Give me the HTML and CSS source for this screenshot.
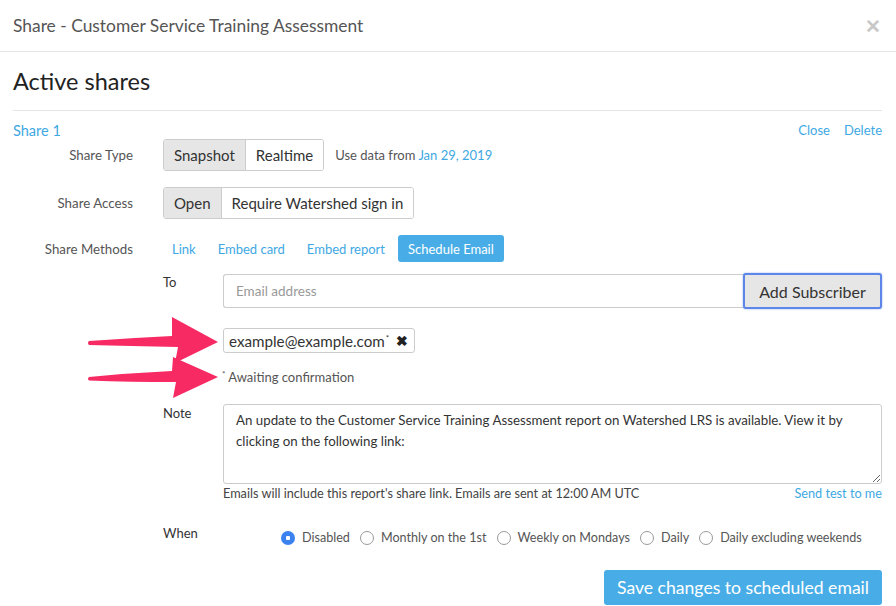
FILE: index.html
```html
<!DOCTYPE html>
<html lang="en">

<head>
    <meta charset="UTF-8">
    <meta name="viewport" content="width=device-width, initial-scale=1.0">
    <title>Share - Customer Service Training Assessment</title>
    <link rel="stylesheet" href="styles.css">
</head>

<body>
    <div class="modal">
        <div class="header">
            <p class="modal-title">Share - Customer Service Training Assessment</p>
            <span class="close-x">&#x2715;</span>
        </div>

        <div class="content">
            <h2 class="section-title">Active shares</h2>

            <div class="share-head">
                <a class="link share-name">Share 1</a>
                <span class="actions"><a class="link">Close</a><a class="link">Delete</a></span>
            </div>

            <div class="field">
                <span class="label">Share Type</span>
                <div class="inline">
                    <div class="btn-group">
                        <span class="seg active">Snapshot</span>
                        <span class="seg">Realtime</span>
                    </div>
                    <span class="note-text">Use data from <a class="link">Jan 29, 2019</a></span>
                </div>
            </div>

            <div class="field">
                <span class="label">Share Access</span>
                <div class="btn-group">
                    <span class="seg active">Open</span>
                    <span class="seg">Require Watershed sign in</span>
                </div>
            </div>

            <div class="field">
                <span class="label">Share Methods</span>
                <div class="methods">
                    <a class="link">Link</a>
                    <a class="link">Embed card</a>
                    <a class="link">Embed report</a>
                    <span class="pill">Schedule Email</span>
                </div>
            </div>

            <div class="email-form">
                <span class="sub-label to">To</span>
                <div>
                    <div class="input-row">
                        <input class="email-input" type="text" placeholder="Email address">
                        <button class="add-btn">Add Subscriber</button>
                    </div>
                    <div class="tags">
                        <span class="tag">example@example.com<sup>*</sup> <b class="remove">&#x2716;</b></span>
                    </div>
                    <p class="awaiting"><sup>*</sup> Awaiting confirmation</p>
                </div>

                <span class="sub-label note-label">Note</span>
                <div>
                    <textarea class="note-box">An update to the Customer Service Training Assessment report on Watershed LRS is available. View it by clicking on the following link:</textarea>
                    <div class="help-row">
                        <span>Emails will include this report's share link. Emails are sent at 12:00 AM UTC</span>
                        <a class="link">Send test to me</a>
                    </div>
                </div>

                <span class="sub-label">When</span>
                <div class="radios">
                    <span class="radio checked"></span><span>Disabled</span>
                    <span class="radio"></span><span>Monthly on the 1st</span>
                    <span class="radio"></span><span>Weekly on Mondays</span>
                    <span class="radio"></span><span>Daily</span>
                    <span class="radio"></span><span>Daily excluding weekends</span>
                </div>
            </div>

            <div class="footer">
                <button class="save-btn">Save changes to scheduled email</button>
            </div>
        </div>
    </div>

    <!-- annotation arrows drawn over the form -->
    <svg class="arrows" width="150" height="92" viewBox="0 0 150 92">
        <path d="M 9 67 Q 50 63 92 61 L 93 47 L 138 67 L 93 88 L 96 72 Q 50 72 9 70.5 Q 7 68.8 9 67 Z" fill="#f72a63" />
        <path d="M 9 31 Q 50 28 92 26 L 92 7 L 138 32 L 95 53 L 98 37 Q 50 36 9 35 Q 7 33 9 31 Z" fill="#f72a63" />
    </svg>
</body>

</html>
```

FILE: styles.css
```css
* {
    padding: 0px;
    margin: 0px;
    box-sizing: border-box;
}

body {
    font-family: Lato, "Open Sans", sans-serif;
    color: #555;
    background: #fff;
    width: 896px;
    height: 606px;
    overflow: hidden;
    position: relative;
}

.link {
    color: #3ea8e3;
    cursor: pointer;
}

.header {
    height: 52px;
    padding: 0 13px;
    display: flex;
    justify-content: space-between;
    align-items: center;
    border-bottom: 1px solid #e5e5e5;
}

.modal-title {
    font-size: 17.4px;
    color: #555;
}

.close-x {
    font-size: 19px;
    font-weight: bold;
    color: #c8c8c8;
    margin-right: 2px;
}

.content {
    padding: 0 14px 0 13px;
}

.section-title {
    font-size: 23.5px;
    font-weight: normal;
    color: #222;
    padding: 15px 0 15px;
    border-bottom: 1px solid #e5e5e5;
}

.share-head {
    display: flex;
    justify-content: space-between;
    align-items: center;
    height: 28px;
    padding-top: 10px;
    font-size: 13px;
}

.share-name {
    font-size: 14.5px;
}

.actions {
    display: flex;
    gap: 14px;
}

.field {
    display: grid;
    grid-template-columns: 120px 1fr;
    column-gap: 30px;
    align-items: center;
    margin-bottom: 16px;
}

.label {
    text-align: right;
    font-size: 13.3px;
    color: #555;
}

.inline {
    display: flex;
    align-items: center;
    gap: 11px;
}

.btn-group {
    display: flex;
    width: max-content;
    border: 1px solid #ccc;
    border-radius: 3px;
    overflow: hidden;
}

.seg {
    height: 30px;
    padding: 0 10px 0 10px;
    display: flex;
    align-items: center;
    font-size: 15px;
    color: #333;
    background: #fff;
}

.seg + .seg {
    border-left: 1px solid #ccc;
}

.seg.active {
    background: #e6e6e6;
}

.note-text {
    font-size: 13px;
    color: #555;
}

.methods {
    display: flex;
    align-items: center;
    gap: 22px;
    font-size: 13px;
    padding-left: 9px;
}

.pill {
    background: #48ade6;
    color: #fff;
    height: 27px;
    padding: 0 10px;
    display: flex;
    align-items: center;
    border-radius: 3px;
    margin-left: -9px;
}

/* negative margin collapses with the 16px below the last field */
.email-form {
    display: grid;
    grid-template-columns: 60px 1fr;
    margin-left: 150px;
    margin-top: -5px;
}

.sub-label {
    font-size: 13px;
    color: #333;
}

.sub-label.to {
    padding-top: 1px;
}

.sub-label.note-label {
    padding-top: 1px;
}

.input-row {
    display: flex;
    align-items: center;
}

.email-input {
    flex: 1;
    height: 34px;
    border: 1px solid #ccc;
    border-right: none;
    border-radius: 3px 0 0 3px;
    padding: 0 12px;
    font-family: inherit;
    font-size: 13.5px;
    color: #555;
    outline: none;
}

.email-input::placeholder {
    color: #999;
}

.add-btn {
    height: 36px;
    width: 139px;
    font-family: inherit;
    font-size: 16px;
    color: #333;
    background: #e6e6e6;
    border: 2px solid #5e86e8;
    border-radius: 3px;
    box-shadow: 0 0 2px #8aa8f0;
}

.tags {
    padding-top: 19px;
}

.tag {
    display: inline-flex;
    align-items: center;
    height: 25px;
    padding: 0 6px 0 5px;
    border: 1px solid #ccc;
    border-radius: 3px;
    font-size: 15.2px;
    color: #333;
}

.tag sup {
    font-size: 8px;
    align-self: flex-start;
    margin-top: 4px;
    margin-left: 1px;
}

.remove {
    margin-left: 7px;
    font-size: 14px;
    color: #222;
}

.awaiting {
    font-size: 13px;
    color: #555;
    padding: 16px 0 0 0;
    margin-left: -1px;
    height: 51px;
}

.awaiting sup {
    font-size: 8px;
}

.note-box {
    display: block;
    width: 100%;
    height: 80px;
    border: 1px solid #ccc;
    border-radius: 3px;
    padding: 5px 30px 5px 12px;
    font-family: inherit;
    font-size: 13.3px;
    line-height: 21px;
    color: #333;
    resize: vertical;
}

.help-row {
    display: flex;
    justify-content: space-between;
    font-size: 12.7px;
    color: #444;
    padding-top: 1px;
    height: 41px;
}

.radios {
    display: flex;
    align-items: center;
    font-size: 12.6px;
    color: #555;
    padding-left: 58px;
    padding-top: 5px;
}

.radio {
    width: 14px;
    height: 14px;
    border-radius: 50%;
    border: 1px solid #9a9a9a;
    background: #fff;
    margin: 0 7px 0 10px;
}

.radio:first-child {
    margin-left: 0;
}

.radio.checked {
    border: none;
    background: radial-gradient(circle, #fff 0 2px, #3b82f0 2.5px);
}

.footer {
    display: flex;
    justify-content: flex-end;
    padding-top: 25px;
}

.save-btn {
    height: 35px;
    padding: 0 13px;
    font-family: inherit;
    font-size: 17.6px;
    color: #fff;
    background: #48ade6;
    border: none;
    border-radius: 3px;
}

.arrows {
    position: absolute;
    left: 80px;
    top: 310px;
}
```
